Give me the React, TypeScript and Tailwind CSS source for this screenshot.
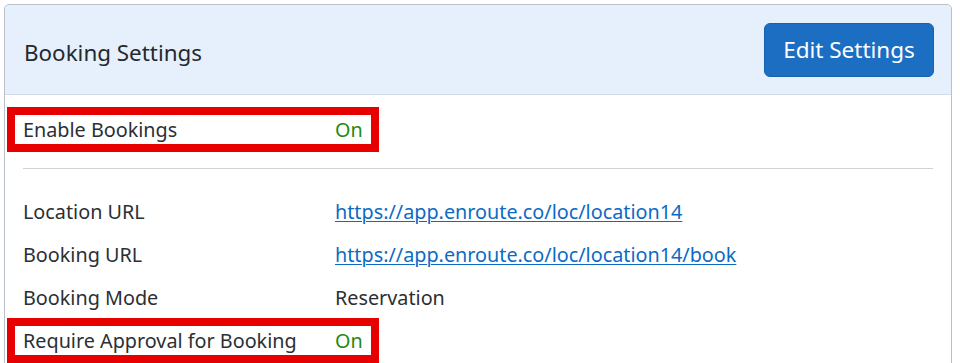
const font = { fontFamily: '"Noto Sans", "Open Sans", sans-serif' };

type Row = {
  label: string;
  value: string;
  kind?: "link" | "on";
  highlight?: boolean;
};

const rows: Row[] = [
  { label: "Location URL", value: "https://app.enroute.co/loc/location14", kind: "link" },
  { label: "Booking URL", value: "https://app.enroute.co/loc/location14/book", kind: "link" },
  { label: "Booking Mode", value: "Reservation" },
  { label: "Require Approval for Booking", value: "On", kind: "on", highlight: true },
];

function SettingRow({ label, value, kind, highlight }: Row) {
  return (
    <div
      className={
        "flex items-center h-[29px] " +
        (highlight ? "-mx-2 px-2 w-[356px] outline-8 outline-solid outline-[#e60000]" : "")
      }
    >
      <span className="w-[312px] shrink-0 text-[#2b2f33]">{label}</span>
      {kind === "link" ? (
        <a className="text-[#0b6bc4] underline underline-offset-2 decoration-1">{value}</a>
      ) : kind === "on" ? (
        <span className="text-[#1e8a12]">{value}</span>
      ) : (
        <span className="text-[#2b2f33]">{value}</span>
      )}
    </div>
  );
}

export default function App() {
  return (
    <div className="w-[960px] h-[363px] overflow-hidden bg-white pt-1 pl-1 pr-2" style={font}>
      <div className="border border-[#b9c0c8] rounded-[5px] h-[400px]">
        <div className="flex items-center justify-between h-[90px] bg-[#e6f0fc] border-b border-[#d3dce6] rounded-t-[5px] pl-[19px] pr-[17px]">
          <h2 className="text-[22.4px] text-[#25292d] pt-[6px]">Booking Settings</h2>
          <button className="w-[170px] h-[54px] rounded-[6px] bg-[#1b6ec2] border border-[#1861ac] text-white text-[22.5px]">
            Edit Settings
          </button>
        </div>
        <div className="px-[18px] pt-5 text-[19.8px] leading-[29px]">
          <SettingRow label="Enable Bookings" value="On" kind="on" highlight />
          <div className="mt-6 border-t border-[#cfd3d7]" />
          <div className="mt-[28px] flex flex-col gap-[14px]">
            {rows.map((r) => (
              <SettingRow key={r.label} {...r} />
            ))}
          </div>
        </div>
      </div>
    </div>
  );
}
